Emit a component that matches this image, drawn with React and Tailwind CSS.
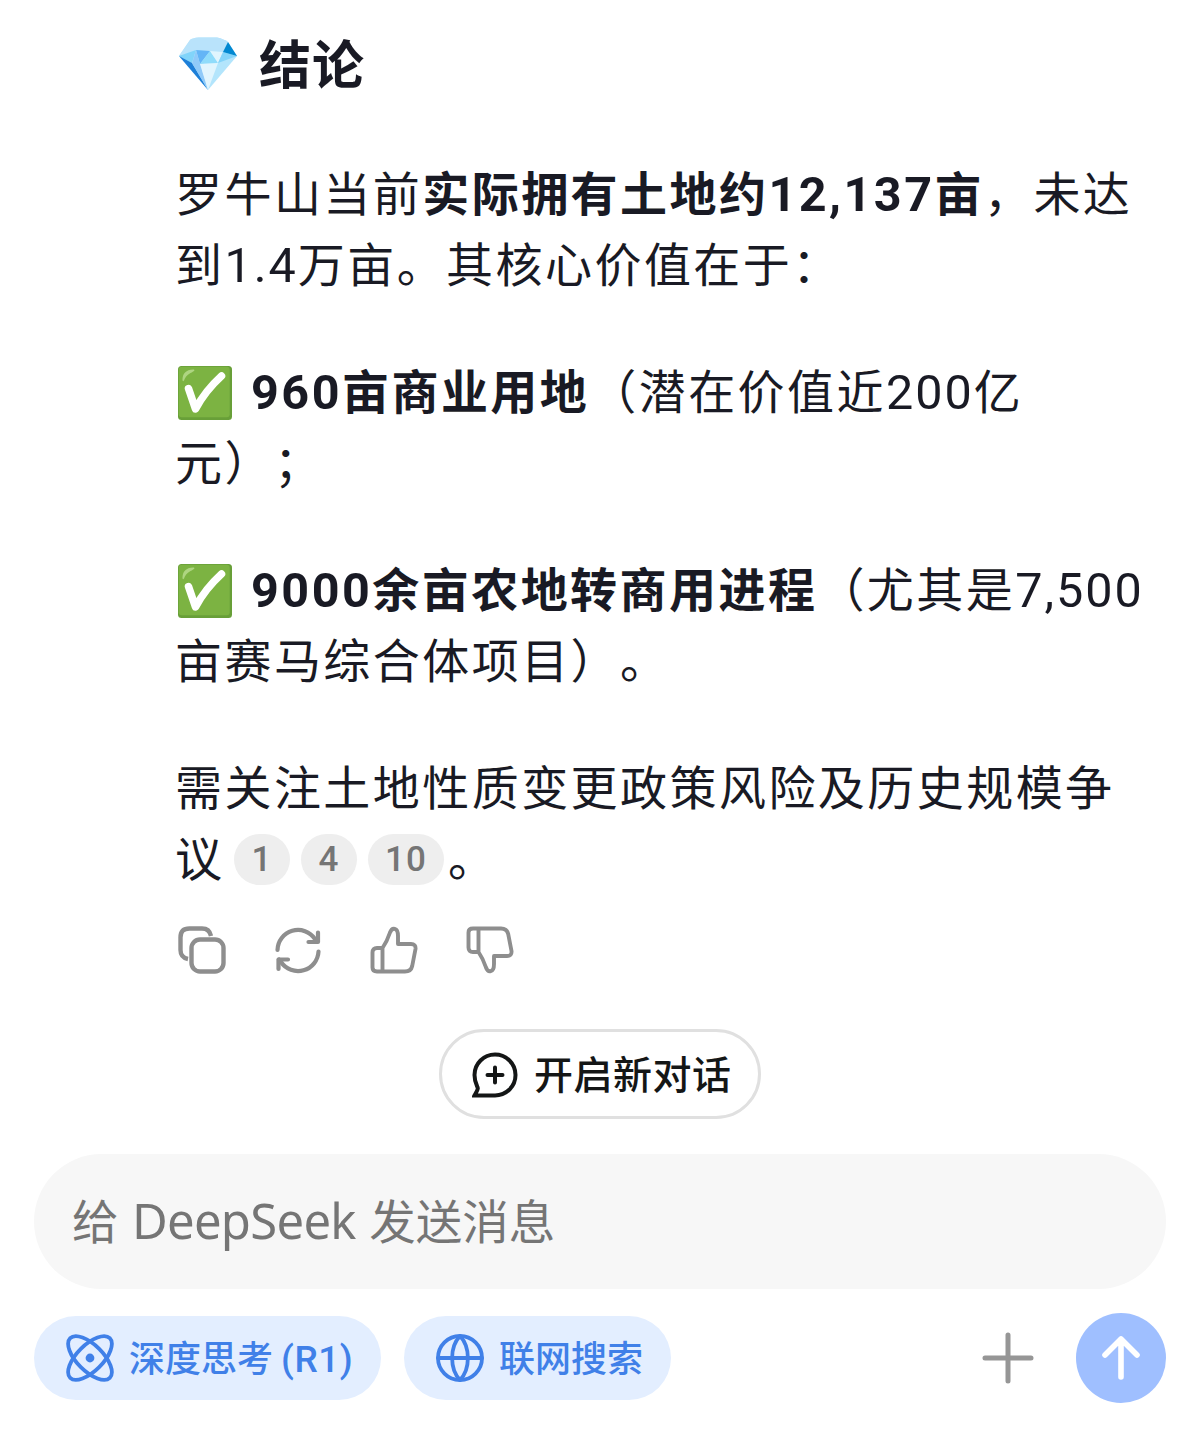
import React from "react";

const Gem = () => (
  <svg viewBox="0 0 60 56" className="w-[60px] h-[56px] shrink-0">
    <path d="M1 20 12 4Q14 2 21 1.500H39Q46 3 50 6L59 20 30 54Z" fill="#b3e5fc" />
    <path d="M1 20 12 4Q14 2 21 1.500H39Q46 3 50 6L45 16 32 15 18 14Z" fill="#b9e3fb" />
    <path d="M1 20 18 14 14 27Z" fill="#81d4fa" />
    <path d="M18 14 32 15 22 28Z" fill="#64b5f6" />
    <path d="M18 14 22 28H14Z" fill="#90caf9" />
    <path d="M32 15 40 27 22 28Z" fill="#90dcfb" />
    <path d="M32 15 45 16 40 27Z" fill="#e1f5fe" />
    <path d="M45 16 59 20 40 27Z" fill="#84d4fa" />
    <path d="M50 6 59 20 45 16Z" fill="#0288d1" />
    <path d="M1 20 14 27 30 54Z" fill="#1e7fd8" />
    <path d="M14 27H22L30 54Z" fill="#90caf9" />
    <path d="M22 28 40 27 30 54Z" fill="#e1f5fe" />
  </svg>
);

const Check = () => (
  <svg viewBox="0 0 54 54" className="inline-block w-[54px] h-[54px] align-[-11px] mr-[19px] ml-[3px]">
    <rect width="54" height="54" rx="3.5" fill="#689f38" />
    <rect x="0.7" y="0.7" width="51" height="50.6" rx="3" fill="#7cb342" />
    <path d="M4.5 13C5 7 8 4 15 3.5 18 3.6 16 5.5 12.500 7 8.500 9 7 12 6 14.500 5 16 4.400 15 4.500 13Z" fill="#aed581" />
    <path d="M10.500 22.500 17.500 43Q27 25 43.500 10" fill="none" stroke="#fff" strokeWidth="7.500" strokeLinecap="round" strokeLinejoin="round" />
  </svg>
);

const stroke = { fill: "none", stroke: "currentColor", strokeLinecap: "round", strokeLinejoin: "round" };

const Copy = () => (
  <svg viewBox="0 0 48 48" className="size-12" {...stroke} strokeWidth="4.400">
    <rect x="13.500" y="13.500" width="32" height="32" rx="8.500" />
    <path d="M10 33C5 32 2.500 29 2.500 24V11.500Q2.500 2.500 11.500 2.500H24C29 2.500 32 5 33 10" strokeLinecap="butt" />
  </svg>
);

const Refresh = () => (
  <svg viewBox="0 0 48 48" className="size-12" {...stroke} strokeWidth="4.200">
    <path d="M3.500 24A20.500 20.500 0 0 1 41 13L43 15.500M44.500 25.500A20.500 20.500 0 0 1 7 36L5 33.500" />
    <path d="M44 6.500V16H34.500M4.500 43V33.500H14" />
  </svg>
);

const Thumb = ({ className }) => (
  <svg viewBox="0 0 48 48" className={className} {...stroke} strokeWidth="3.900">
    <path d="M12.500 22H7Q2.500 22 2.500 26.500V41.500Q2.500 45.500 7 45.500H35Q41 45.500 42.200 40L45.500 23Q46 18 41 18H28V10C28 1 22 1 20 6.500Q17 15.500 12.500 22V45.500" />
  </svg>
);

const NewChat = () => (
  <svg viewBox="0 0 46 46" className="mt-[2px] ml-px size-[46px]" {...stroke} strokeWidth="4">
    <path d="M23 2.500A20.500 20.500 0 1 1 23 43.500H2.500C4 40.500 5.500 38.500 5.800 36.500 6 35 2.500 31 2.500 23A20.500 20.500 0 0 1 23 2.500Z" strokeLinejoin="miter" />
    <path d="M23 15.500V30.500M15.500 23H30.500" />
  </svg>
);

const Atom = () => (
  <svg viewBox="0 0 48 48" className="size-12" {...stroke} strokeWidth="3.800">
    <ellipse cx="24" cy="24" rx="28" ry="13" transform="rotate(45 24 24)" />
    <ellipse cx="24" cy="24" rx="28" ry="13" transform="rotate(-45 24 24)" />
    <circle cx="24" cy="24" r="4.400" fill="currentColor" stroke="none" />
  </svg>
);

const Globe = () => (
  <svg viewBox="0 0 48 48" className="size-12" {...stroke} strokeWidth="3.800">
    <circle cx="24" cy="24" r="22" />
    <path d="M2 24H46M24 2C13.500 13 13.500 35 24 46M24 2C34.500 13 34.500 35 24 46" />
  </svg>
);

const Cite = ({ children, className }) => (
  <span className={"mt-[7px] inline-flex h-[51px] items-center justify-center rounded-full bg-[#eeeeee] text-[35px] leading-none font-medium tracking-[1px] text-[#757575] [font-family:Roboto,sans-serif] " + className}>
    {children}
  </span>
);

const Num = ({ children }) => (
  <span className="text-[48.500px] leading-none tracking-[2px] [font-family:Roboto,sans-serif]">{children}</span>
);

const BoldNum = ({ children }) => (
  <span className="text-[48.500px] leading-none tracking-[2.500px] [font-family:Roboto,sans-serif]">{children}</span>
);

const P = ({ children }) => <p className="whitespace-nowrap mb-14">{children}</p>;

export default function App() {
  return (
    <main lang="zh-CN" className="flex h-[1442px] w-[1186px] flex-col overflow-hidden bg-white text-[#191a24] [font-family:'Noto_Sans_CJK_SC',sans-serif] [text-spacing-trim:space-all]">
      <section className="pl-[175px] text-[47px] leading-[71px] tracking-[2.450px]">
        <h1 className="mt-[27px] mb-[54px] flex h-[74px] items-center gap-[21px] pl-[3px] text-[52px] font-bold tracking-[0.5px]">
          <Gem />
          <span className="mb-[6px] tracking-[1px]">结论</span>
        </h1>
        <P>
          罗牛山当前<b>实际拥有土地约<BoldNum>12,137</BoldNum>亩</b>，未达<br />
          到<Num>1.4</Num>万亩。其核心价值在于：
        </P>
        <P>
          <Check /><b><BoldNum>960</BoldNum>亩商业用地</b>（潜在价值近<Num>200</Num>亿<br />
          元）；
        </P>
        <P>
          <Check /><b><BoldNum>9000</BoldNum>余亩农地转商用进程</b>（尤其是<Num>7,500</Num><br />
          亩赛马综合体项目）。
        </P>
        <div className="whitespace-nowrap">
          需关注土地性质变更政策风险及历史规模争
          <div className="flex h-[71px] items-center">
            <span className="w-[59px]">议</span>
            <Cite className="w-14">1</Cite>
            <Cite className="ml-[11px] w-14">4</Cite>
            <Cite className="ml-[11px] w-[76px]">10</Cite>
            <span className="ml-1">。</span>
          </div>
        </div>
      </section>
      <div className="mt-[35px] ml-[178px] flex h-12 gap-[48px] text-[#8e8e8e]">
        <Copy />
        <Refresh />
        <Thumb className="size-12" />
        <Thumb className="size-12 -scale-y-100" />
      </div>
      <button className="mt-[55px] ml-[439px] flex h-[90px] w-[322px] shrink-0 items-center gap-4 rounded-full border-[3px] border-[#e0e0e0] pl-[29px] text-[39px] font-medium tracking-[0.5px] whitespace-nowrap text-[#141616]">
        <NewChat />
        <span className="mb-[3px]">开启新对话</span>
      </button>
      <div className="mt-[35px] ml-[34px] flex h-[135px] w-[1132px] shrink-0 items-center rounded-full bg-[#f7f7f7] pb-[5px] pl-[38px] text-[46.500px] whitespace-nowrap text-[#757575]">
        <span className="[word-spacing:3px]">
          给 <span className="text-[49px] leading-none tracking-[-0.700px] [font-family:'Noto_Sans',sans-serif]">DeepSeek</span> 发送消息
        </span>
      </div>
      <div className="mt-6 ml-[34px] flex h-[90px] w-[1132px] shrink-0 items-center text-[36px] font-medium whitespace-nowrap text-[#4080e8]">
        <button className="flex h-[84px] w-[347px] items-center gap-[15px] rounded-full bg-[#e3eeff] pl-8">
          <Atom />
          <span className="mb-1">深度思考 <span className="text-[37px] leading-none tracking-[0.500px] [font-family:Roboto,sans-serif]">(R1)</span></span>
        </button>
        <button className="ml-[23px] flex h-[84px] w-[267px] items-center gap-[15px] rounded-full bg-[#e3eeff] pl-8">
          <Globe />
          <span className="mb-1">联网搜索</span>
        </button>
        <svg viewBox="0 0 52 52" className="ml-auto size-[52px] text-[#969696]" {...stroke} strokeWidth="5">
          <path d="M26 3V49M3 26H49" />
        </svg>
        <button className="ml-[42px] flex size-[90px] items-center justify-center rounded-full bg-[#9fbfff] text-white">
          <svg viewBox="0 0 40 46" className="h-[46px] w-10" {...stroke} strokeWidth="5.600">
            <path d="M20 4V42M4 20 20 4 36 20" />
          </svg>
        </button>
      </div>
    </main>
  );
}
